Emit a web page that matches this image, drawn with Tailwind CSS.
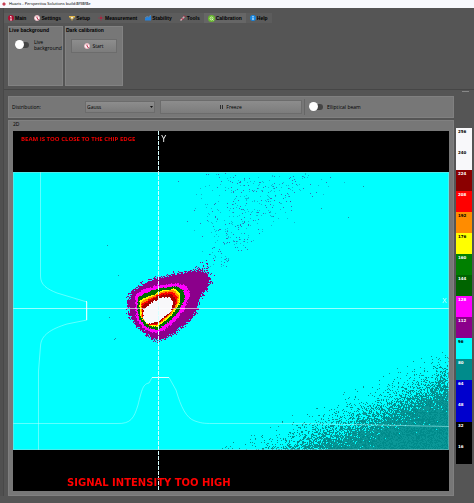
<!DOCTYPE html>
<html lang="en">
<head>
    <meta charset="UTF-8">
    <meta name="viewport" content="width=device-width, initial-scale=1.0">
    <title>Huaris - Perspectiva Solutions</title>
    <script src="https://cdn.jsdelivr.net/npm/@tailwindcss/browser@4"></script>
</head>
<body class="min-h-screen bg-[#555] font-['Open_Sans',sans-serif] text-[5px] leading-[6px] text-black">

    <header class="flex h-[8px] items-center gap-[3px] bg-[#f8f9fd] pl-[2px]">
        <svg class="size-[4px]" viewBox="0 0 8 8"><circle cx="4" cy="4" r="3" fill="#b3173d"/><path d="M4 0v8M0 4h8" stroke="#d77" stroke-width="1"/></svg>
        <h1 class="font-['Noto_Sans',sans-serif] text-[4px] leading-[6px]">Huaris - Perspectiva Solutions build:8f98f8e</h1>
    </header>

    <div class="flex">
        <div class="w-[4px] shrink-0 border-r border-[#484848] bg-[#505050]"></div>

        <div class="min-w-0 flex-1">
            <!-- ribbon -->
            <nav class="mt-[5px] flex h-[10px] font-['Liberation_Sans',sans-serif] font-bold">
                <button class="flex items-center gap-px bg-[#5c5c5c] px-[4px]">
                    <svg class="size-[6px]" viewBox="0 0 12 12"><circle cx="6" cy="6" r="6" fill="#b00d32"/><path d="M4 4l2-2v8M4 10h4" stroke="#fff" stroke-width="1.5" fill="none"/></svg>
                    Main
                </button>
                <button class="flex items-center gap-px bg-[#5c5c5c] px-[4px]">
                    <svg class="size-[6px]" viewBox="0 0 12 12"><circle cx="6" cy="6" r="5" fill="#fff" stroke="#e6b9c1" stroke-width="2"/><path d="M6 3v3l3 4" stroke="#c01c3f" stroke-width="2" fill="none"/></svg>
                    Settings
                </button>
                <button class="flex items-center gap-px bg-[#5c5c5c] px-[4px]">
                    <svg class="size-[6px]" viewBox="0 0 12 12"><path d="M0 3h12M2 3v3h8V3M6 6v5" stroke="#e5ba4a" stroke-width="2" fill="none"/><path d="M4 4h4v3H4z" fill="#f5eedc"/></svg>
                    Setup
                </button>
                <button class="flex items-center gap-px bg-[#5c5c5c] px-[4px]">
                    <svg class="size-[6px]" viewBox="0 0 12 12"><path d="M6 0v12M0 6h12" stroke="#96394b" stroke-width="1.5"/><circle cx="6" cy="6" r="2" fill="#b51d3d"/></svg>
                    Measurement
                </button>
                <button class="flex items-center gap-px bg-[#5c5c5c] px-[4px]">
                    <svg class="size-[6px]" viewBox="0 0 12 12"><path d="M0 11V7l4-3 3 1 5-4v10z" fill="#2583df"/><path d="M0 6l4-3 3 1 5-4" stroke="#69b1ef" fill="none"/></svg>
                    Stability
                </button>
                <button class="flex items-center gap-px bg-[#5c5c5c] px-[4px]">
                    <svg class="size-[6px]" viewBox="0 0 12 12"><path d="M1 11l8-8" stroke="#d2a9b0" stroke-width="3"/><path d="M8 1l3 3M3 6l4 4" stroke="#b4173a" stroke-width="2"/></svg>
                    Tools
                </button>
                <button class="flex items-center gap-px bg-[#666] px-[4px]">
                    <svg class="size-[7px]" viewBox="0 0 14 14"><circle cx="7" cy="7" r="7" fill="#69b82f"/><circle cx="7" cy="7" r="3" fill="none" stroke="#eaffd9" stroke-width="1.5"/><path d="M7 7l4 4" stroke="#eaffd9" stroke-width="1.5"/></svg>
                    Calibration
                </button>
                <button class="flex items-center gap-px bg-[#5c5c5c] px-[4px]">
                    <svg class="size-[6px]" viewBox="0 0 12 12"><circle cx="6" cy="6" r="6" fill="#1786e0"/><path d="M6 2v2M6 5v5" stroke="#fff" stroke-width="2"/></svg>
                    Help
                </button>
            </nav>

            <div class="mt-[3px] ml-[4px] flex gap-[2px]">
                <section class="h-[60px] w-[55px] border border-[#828282] bg-[#777]">
                    <h2 class="font-['Liberation_Sans',sans-serif] font-bold">Live background</h2>
                    <label class="mt-[6px] ml-[6px] flex items-center gap-[5px]">
                        <input type="checkbox" class="relative h-[6px] w-[14px] shrink-0 appearance-none rounded-full bg-[#444] before:absolute before:-top-[2px] before:left-0 before:size-[9px] before:rounded-full before:bg-white before:content-['']">
                        <span>Live<br>background</span>
                    </label>
                </section>
                <section class="h-[60px] w-[58px] border border-[#828282] bg-[#777]">
                    <h2 class="font-['Liberation_Sans',sans-serif] font-bold">Dark calibration</h2>
                    <button class="mt-[6px] ml-[5px] flex h-[14px] w-[46px] items-center justify-center gap-[2px] border border-[#6c6c6c] bg-linear-to-b from-[#8d8d8d] to-[#7c7c7c]">
                        <svg class="size-[6px]" viewBox="0 0 12 12"><circle cx="6" cy="6" r="5" fill="#fff" stroke="#e6b9c1" stroke-width="2"/><path d="M6 3v3l3 4" stroke="#c01c3f" stroke-width="2" fill="none"/></svg>
                        Start
                    </button>
                </section>
            </div>

            <div class="mt-[3px] flex h-[7px] justify-end border-t border-[#464646] pr-[5px]">
                <div class="mt-px h-px w-[7px] bg-[#888]"></div>
            </div>

            <div class="flex">
                <main class="ml-[4px] min-w-0 flex-1">
                    <div class="flex h-[22px] items-center border border-[#808080] bg-[#777] pl-[3px] font-medium">
                        <label for="distribution" class="w-[73px]">Distribution:</label>
                        <div class="relative w-[70px]">
                            <select id="distribution" class="block h-[12px] w-full appearance-none border border-[#6c6c6c] bg-linear-to-b from-[#8d8d8d] to-[#7c7c7c] px-px">
                                <option>Gauss</option>
                            </select>
                            <svg class="pointer-events-none absolute top-[5px] right-[2px] h-[2px] w-[3px]" viewBox="0 0 6 4"><path d="M0 0h6L3 4z" fill="#111"/></svg>
                        </div>
                        <button class="ml-[5px] flex h-[14px] flex-1 items-center justify-center gap-[3px] border border-[#6c6c6c] bg-linear-to-b from-[#8d8d8d] to-[#7c7c7c]">
                            <svg class="h-[4px] w-[3px]" viewBox="0 0 6 8"><path d="M1 0v8M5 0v8" stroke="#111" stroke-width="1.5"/></svg>
                            Freeze
                        </button>
                        <label class="ml-[2px] flex w-[149px] items-center gap-[4px] border-l border-[#666] py-[5px] pl-[4px]">
                            <input type="checkbox" class="relative h-[6px] w-[14px] shrink-0 appearance-none rounded-full bg-[#444] before:absolute before:-top-[2px] before:left-0 before:size-[9px] before:rounded-full before:bg-white before:content-['']">
                            Elliptical beam
                        </label>
                    </div>

                    <section class="mt-[2px] border border-[#808080] bg-[#777] px-[4px] pb-[4px]">
                        <h2 class="h-[10px]">2D</h2>
                        <div class="relative font-['DejaVu_Sans',sans-serif]">
                            <canvas id="beam" width="436" height="360" class="block w-full bg-black [image-rendering:pixelated]"></canvas>
                            <p class="absolute top-[5px] left-[8px] font-['Open_Sans',sans-serif] text-[6px] font-bold text-[#f00000]">BEAM IS TOO CLOSE TO THE CHIP EDGE</p>
                            <p class="absolute top-[5px] left-[34%] text-[8px] leading-[8px] text-white">Y</p>
                            <p class="absolute top-[166px] right-[2px] text-[7px] leading-[8px] text-[#b8ffff]">X</p>
                            <p class="absolute bottom-[3px] left-[54px] text-[10px] leading-[10px] font-bold text-[#ff0000]">SIGNAL INTENSITY TOO HIGH</p>
                        </div>
                    </section>
                </main>

                <!-- intensity scale -->
                <ol class="mt-[32px] mr-[2px] ml-[2px] w-[16px] shrink-0 self-start font-['DejaVu_Sans',sans-serif] text-[4px] leading-[8px] font-bold text-white *:h-[21px] *:pl-[2px]">
                    <li class="bg-[#f8f8fa] text-black">256</li>
                    <li class="bg-[#f8f8fa] text-black">240</li>
                    <li class="bg-[#8b0000]">224</li>
                    <li class="bg-[#ff0000]">208</li>
                    <li class="bg-[#ff8c00] text-black">192</li>
                    <li class="bg-[#ffff00] text-black">176</li>
                    <li class="bg-[#008000]">160</li>
                    <li class="bg-[#006400]">144</li>
                    <li class="bg-[#ff00ff]">128</li>
                    <li class="bg-[#8b008b]">112</li>
                    <li class="bg-[#00ffff] text-black">96</li>
                    <li class="bg-[#008b8b]">80</li>
                    <li class="bg-[#0000cd]">64</li>
                    <li class="bg-[#0000cd]">48</li>
                    <li class="bg-black">32</li>
                    <li class="bg-black">16</li>
                </ol>
            </div>
        </div>
    </div>

    <script>
        const canvas = document.getElementById('beam');
        const ctx = canvas.getContext('2d');
        const W = 436, TOP = 41, BOTTOM = 319;

        // fixed seed so the noise is the same on every load
        let seed = 7;
        const rnd = () => {
            seed = (seed * 1664525 + 1013904223) % 4294967296;
            return seed / 4294967296;
        };

        const dot = (x, y, color) => {
            ctx.fillStyle = color;
            ctx.fillRect(Math.round(x), Math.round(y), 1, 1);
        };

        // sensor area
        ctx.fillStyle = '#00ffff';
        ctx.fillRect(0, TOP, W, BOTTOM - TOP);

        // low intensity corner
        for (let y = TOP; y < BOTTOM; y++) {
            for (let x = 200; x < W; x++) {
                const edge = 315 - 0.447 * (x - 284);
                const p = 1 / (1 + Math.exp(-(y - edge) / 8));
                if (p > 0.015 && rnd() < p) dot(x, y, rnd() < 0.5 ? '#008b8b' : '#0a9797');
            }
        }

        // specks along the diagonal tail
        for (let i = 0; i < 430; i++) {
            const t = Math.pow(rnd(), 0.6);
            const spread = 8 + 62 * t;
            const x = 198 + 63 * t + (rnd() + rnd() + rnd() - 1.5) * spread;
            const y = 140 - 98 * t + (rnd() - 0.5) * 12;
            if (y > TOP) dot(x, y, rnd() < 0.4 ? 'rgba(70,40,150,0.65)' : 'rgba(20,120,170,0.5)');
        }
        [[94, 114], [105, 144], [96, 186], [102, 207], [101, 208], [335, 86], [350, 55], [308, 77]].forEach(([x, y]) => dot(x, y, '#1a8fa8'));

        // contour levels in thirds of a pixel, origin at (97, 119)
        const levels = [
            { color: '#8b008b', jitter: 4.5, pts: [75,115, 130,85, 200,70, 270,58, 298,75, 300,100, 285,125, 268,150, 258,190, 225,225, 185,255, 143,275, 110,258, 75,225, 55,190, 53,145] },
            { color: '#ff00ff', jitter: 1.6, pts: [76,138, 96,120, 146,105, 201,100, 231,109, 240,135, 224,178, 194,215, 165,238, 141,250, 105,240, 80,208, 75,170] },
            { color: '#006e00', jitter: 1.2, pts: [83,142, 111,128, 146,115, 201,109, 221,121, 225,148, 205,186, 175,217, 141,240, 111,233, 86,203, 81,166] },
            { color: '#ffff00', jitter: 1.2, pts: [89,152, 121,138, 156,122, 197,116, 210,134, 209,160, 186,194, 143,231, 116,228, 91,199] },
            { color: '#ff8c00', jitter: 1, pts: [92,156, 123,141, 156,125, 192,120, 207,138, 205,162, 184,191, 142,227, 118,226, 94,200] },
            { color: '#ff0000', jitter: 1, pts: [95,161, 126,144, 156,129, 187,125, 203,142, 200,163, 181,189, 141,224, 118,224, 97,201] },
            { color: '#a80000', jitter: 1, pts: [98,166, 128,147, 158,134, 185,131, 198,148, 195,168, 177,192, 141,222, 116,223, 98,203] },
            { color: '#f8f8fa', jitter: 1.2, pts: [101,176, 131,154, 156,142, 181,141, 190,159, 183,185, 148,213, 115,222, 100,206] }
        ];
        levels.forEach(({ color, jitter, pts }) => {
            const path = new Path2D();
            for (let i = 0; i < pts.length; i += 2) path.lineTo(97 + pts[i] / 3, 119 + pts[i + 1] / 3);
            path.closePath();
            for (let y = 130; y < 215; y++) {
                for (let x = 105; x < 205; x++) {
                    const dx = (rnd() - 0.5) * jitter, dy = (rnd() - 0.5) * jitter;
                    if (ctx.isPointInPath(path, x + 0.5 + dx, y + 0.5 + dy)) dot(x, y, color);
                }
            }
        });
        for (let i = 0; i < 130; i++) {
            dot(190 + (rnd() + rnd() - 1) * 11, 145 + (rnd() + rnd() - 1) * 17, '#8b008b');
        }

        // profiles
        const curve = (d) => {
            ctx.strokeStyle = 'rgba(190,255,255,0.5)';
            ctx.lineWidth = 1;
            ctx.stroke(new Path2D(d));
        };
        curve('M27.5 41V145C27.5 154 34 158 44 162L74 171V189L54 193C38 198 28 204 27.5 215L25.5 240V319');
        curve('M0 292.5H104C118 293 121 287 125 274C129 258 130 253 136 252L139 246.5H156L163 259C168 276 173 287 182 290C188 292 190 292.5 200 292.5H290L436 295.5');
        ctx.strokeStyle = '#d8ffff';
        ctx.stroke(new Path2D('M73.5 170V189M139 246.5H156'));

        // axes
        ctx.strokeStyle = 'rgba(255,255,255,0.6)';
        ctx.stroke(new Path2D('M0 177.5H436'));
        ctx.strokeStyle = '#d8ffff';
        ctx.setLineDash([4, 1]);
        ctx.stroke(new Path2D('M145.5 0V360'));

        // chip outline
        ctx.strokeStyle = 'rgba(190,210,210,0.8)';
        ctx.setLineDash([1, 1]);
        ctx.strokeRect(0.5, TOP + 0.5, W - 1, BOTTOM - TOP - 1);
    </script>
</body>
</html>
